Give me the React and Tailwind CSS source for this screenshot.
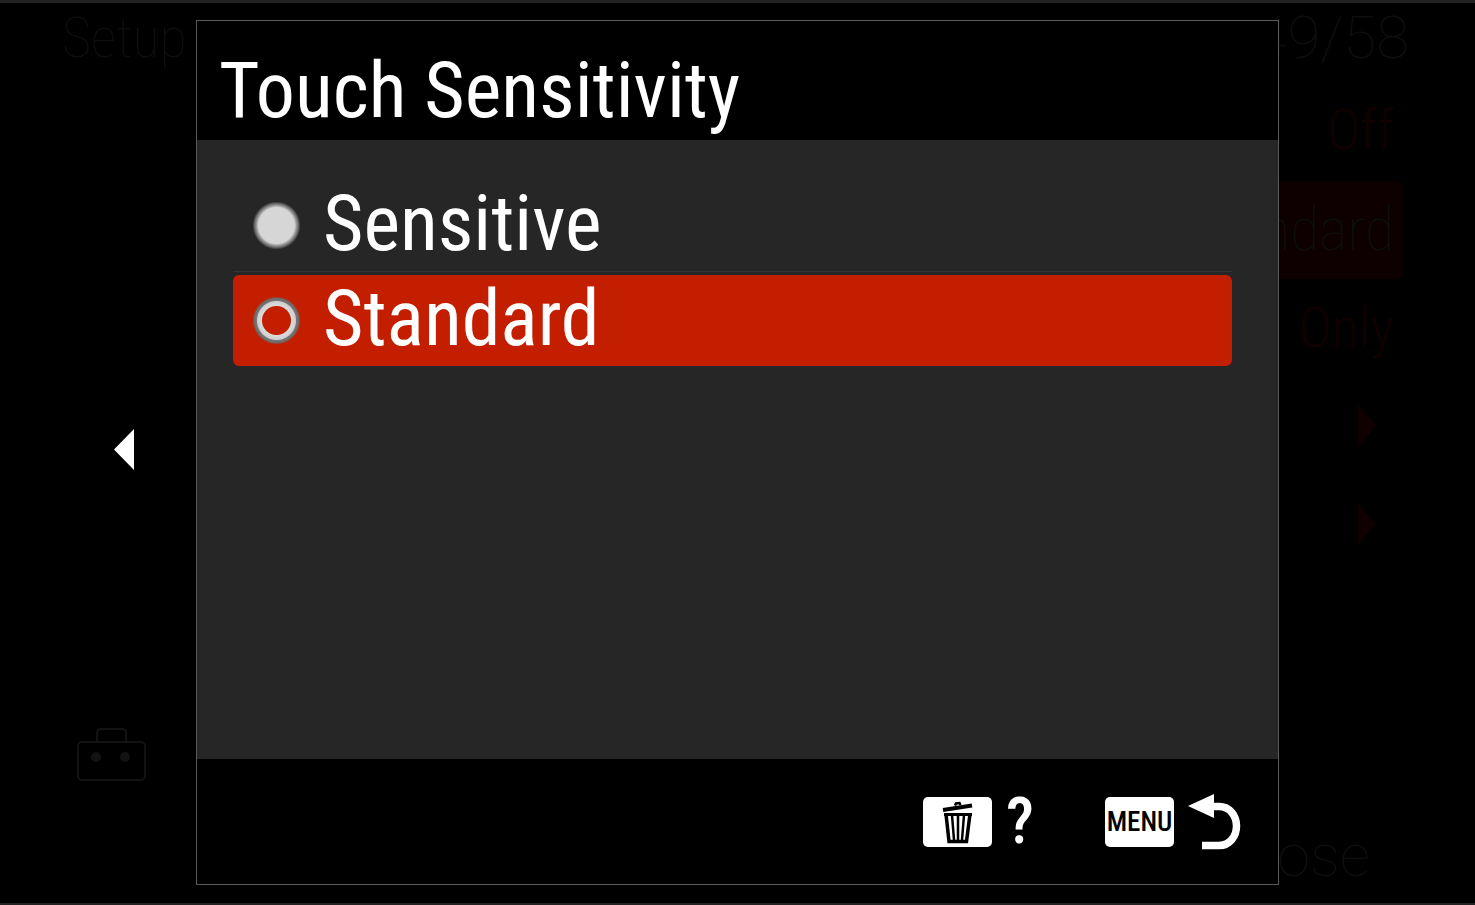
function ValueArrow() {
  return (
    <svg className="mr-[18px] h-[42px] w-[18px]" viewBox="0 0 18 42" aria-hidden="true">
      <path d="M0 0 L18 21 L0 42 Z" fill="#100000" />
    </svg>
  );
}

function MenuBackdrop() {
  return (
    <div
      aria-hidden="true"
      className="absolute inset-0 flex flex-col font-['Roboto_Condensed',sans-serif] text-[60px] leading-[70px] text-[#0e0e0e]"
    >
      <div className="flex justify-between pr-[66px] pl-[62px] font-thin">
        <span className="text-[56px]">Setup</span>
        <span className="font-['Roboto',sans-serif]">49/58</span>
      </div>
      <div className="flex flex-1 justify-between pt-[10px]">
        <div className="flex flex-col justify-end pb-[121px] pl-[77px]">
          <svg className="h-[54px] w-[70px]" viewBox="0 0 70 54" fill="none" stroke="#121212" strokeWidth="2">
            <rect x="1" y="14" width="67" height="38" rx="4" />
            <path d="M20 14 V5 Q20 1 24 1 H45 Q49 1 49 5 V14" />
            <circle cx="19" cy="29" r="5" fill="#121212" stroke="none" />
            <circle cx="48" cy="29" r="5" fill="#121212" stroke="none" />
          </svg>
        </div>
        <div className="flex flex-col items-end pr-[72px] text-[#100000]">
          <div className="flex h-[98px] items-center pr-[9px] pb-1 text-[56px] font-light">Off</div>
          <div className="flex h-[98px] items-center rounded-lg bg-[#0f0000] pr-[9px] pl-6 font-thin text-[#0b100d]">
            Standard
          </div>
          <div className="flex h-[98px] items-center pr-[9px] text-[56px] font-light">Only</div>
          <div className="flex h-[98px] items-center pr-[9px]">
            <ValueArrow />
          </div>
          <div className="flex h-[98px] items-center pr-[9px]">
            <ValueArrow />
          </div>
        </div>
      </div>
      <div className="absolute right-[105px] bottom-3 font-['Roboto',sans-serif] font-thin">Close</div>
    </div>
  );
}

function Option({ id, label, highlighted, defaultChecked }) {
  return (
    <label
      htmlFor={id}
      className={
        "flex h-[91px] items-center gap-[22px] rounded-md pl-[19px] " +
        (highlighted ? "bg-[#c41e00]" : "")
      }
    >
      <input
        id={id}
        type="radio"
        name="sensitivity"
        defaultChecked={defaultChecked}
        className="size-[49px] appearance-none rounded-full bg-[radial-gradient(circle,transparent_14px,#dadada_15px,#d0d0d0_19px,#777777_20px,#6b6b6b_22px,transparent_24px)] checked:bg-[radial-gradient(circle,#d6d6d6_18px,#9a9a9a_20px,#666666_22px,transparent_24px)]"
      />
      <span className="pb-1">{label}</span>
    </label>
  );
}

function KeyCap({ children }) {
  return (
    <span className="flex h-[50px] w-[69px] items-center justify-center rounded-[5px] bg-white">
      {children}
    </span>
  );
}

export default function App() {
  return (
    <main className="relative grid min-h-screen grid-cols-[196px_1fr_196px] overflow-hidden border-t-[3px] border-b-2 border-[#222222] bg-black font-['Roboto_Condensed',sans-serif] text-white">
      <MenuBackdrop />

      <div className="relative flex items-center justify-end pr-[62px] pb-2">
        <button type="button" aria-label="Back">
          <svg className="block h-[41px] w-5" viewBox="0 0 20 41" aria-hidden="true">
            <path d="M20 0 V41 L0 20.500 Z" fill="#ffffff" />
          </svg>
        </button>
      </div>

      <section
        role="dialog"
        aria-labelledby="dialog-title"
        className="relative mt-[17px] mb-[18px] flex flex-col border border-[#5a5a5a] bg-black"
      >
        <header className="flex h-[119px] items-center pt-5 pl-[22px]">
          <h1 id="dialog-title" className="text-[78px] leading-[92px]">
            Touch Sensitivity
          </h1>
        </header>

        <fieldset className="flex-1 bg-[#262626] pt-10 pr-[46px] pl-9 text-[78px] leading-[92px]">
          <Option id="sensitive" label="Sensitive" defaultChecked />
          <hr className="mb-[3px] border-[#363636]" />
          <Option id="standard" label="Standard" highlighted />
        </fieldset>

        <footer className="flex h-[125px] items-center justify-end gap-[73px] pr-[37px]">
          <button type="button" aria-label="Help" className="flex items-center gap-[14px]">
            <KeyCap>
              <svg className="h-[50px] w-[69px]" viewBox="0 0 69 50" fill="none" stroke="#000000" aria-hidden="true">
                <path d="M20 13 L49 8.500" strokeWidth="4" />
                <path d="M32 8.500 L33 6.500 L36.500 6 L37.500 8" strokeWidth="2.500" />
                <path d="M21 17.500 H49" strokeWidth="3" />
                <path d="M23 17 L26 44.500 H43.500 L47 17" strokeWidth="3.500" />
                <path d="M29 18 L31 43 M35 18 V43 M41 18 L39 43" strokeWidth="2.500" />
              </svg>
            </KeyCap>
            <span className="w-[26px] text-[64px] leading-[50px] font-medium">?</span>
          </button>
          <button type="button" aria-label="Menu, return" className="flex items-center gap-[14px]">
            <KeyCap>
              <span className="text-[27px] leading-[34px] font-medium text-black">MENU</span>
            </KeyCap>
            <svg className="h-14 w-[53px]" viewBox="0 0 53 56" fill="none" aria-hidden="true">
              <path d="M0 12 L26 0 V24 Z" fill="#ffffff" />
              <path
                d="M25 12.500 H31 C42 12.500 48.500 22 48.500 32 C48.500 42 42 51.500 31 51.500 H14"
                stroke="#ffffff"
                strokeWidth="7.500"
              />
            </svg>
          </button>
        </footer>
      </section>
    </main>
  );
}
